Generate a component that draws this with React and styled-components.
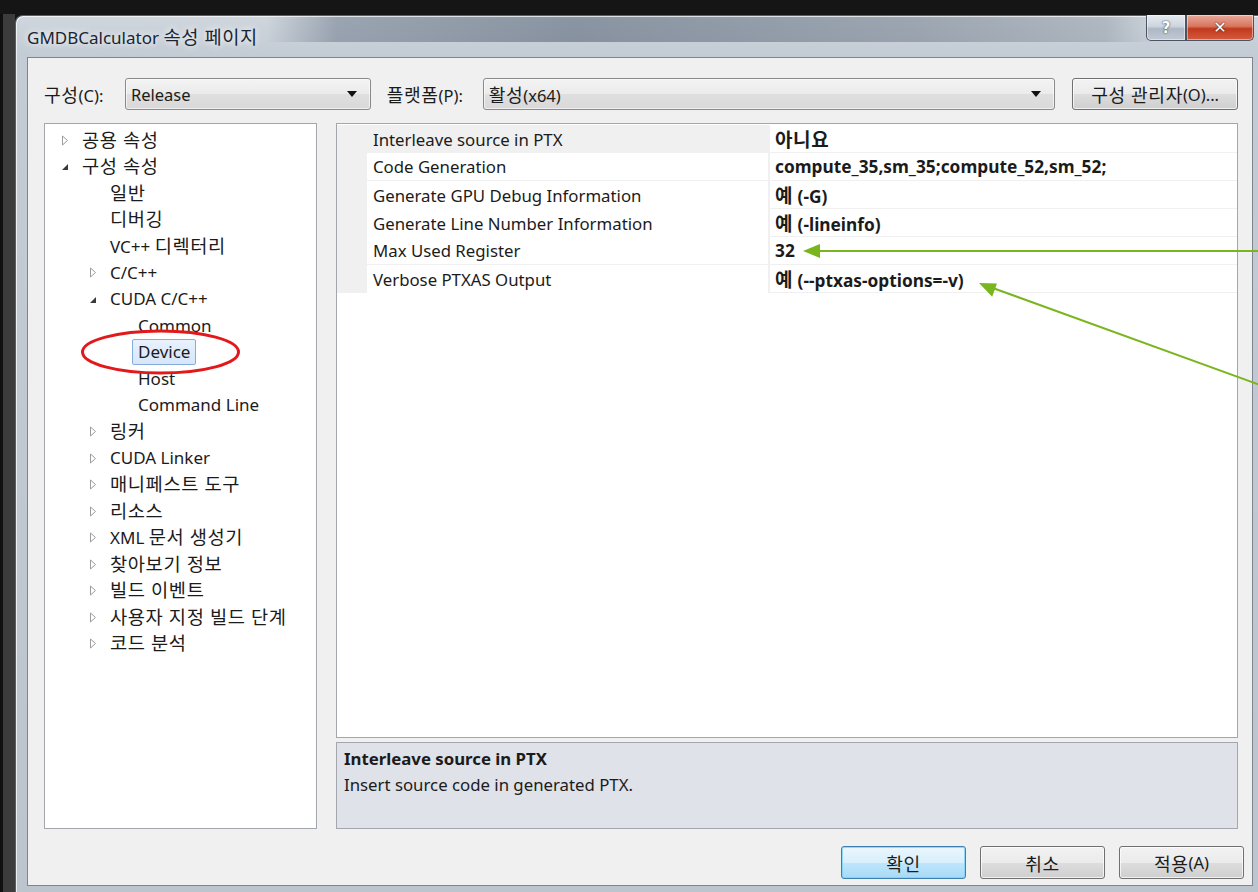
import React from "react";
import styled, { createGlobalStyle } from "styled-components";

const GlobalStyle = createGlobalStyle`
  html, body {
    margin: 0;
    padding: 0;
    overflow: hidden;
    background: #151515;
  }
  body {
    font-family: "Noto Sans", "Noto Sans CJK KR", sans-serif;
    color: #1b1b1b;
  }
  * { box-sizing: border-box; }
`;

/* Hangul runs are set a little larger and looser so they sit like Malgun Gothic beside the Latin text */
const Hangul = styled.span`
  font-size: 1.1em;
  letter-spacing: 0.6px;
`;

const HANGUL_RUN = /([\u3131-\u318E\uAC00-\uD7A3]+(?:\s+[\u3131-\u318E\uAC00-\uD7A3]+)*)/;

function T({ children }) {
  const parts = String(children).split(HANGUL_RUN);
  return parts.map((part, i) =>
    i % 2 === 1 ? <Hangul key={i}>{part}</Hangul> : <React.Fragment key={i}>{part}</React.Fragment>
  );
}

const Screen = styled.div`
  position: relative;
  width: 1258px;
  height: 892px;
  overflow: hidden;
  padding: 15px 0 0 15px;
  background:
    linear-gradient(180deg, #151515 0 14px, transparent 14px),
    linear-gradient(90deg, #101010 0 3px, #3c3c3c 3px 15px, #151515 15px);
`;

const Window = styled.div`
  width: 1247px;
  height: 877px;
  display: flex;
  flex-direction: column;
  padding: 0 8px 0 11px;
  border: 1px solid #55606c;
  border-right: none;
  border-bottom: none;
  border-radius: 8px 0 0 0;
  background:
    linear-gradient(90deg, transparent 250px, rgba(84, 98, 118, 0.42) 320px, rgba(70, 84, 104, 0.5) 560px, rgba(96, 108, 124, 0.45) 900px, rgba(120, 130, 142, 0.35) 1090px, transparent 1140px) top / 100% 26px no-repeat,
    linear-gradient(180deg, #cfd6dd 0%, #c3cbd4 40px, #bcc5ce 100%);
  box-shadow: inset 1px 1px 0 rgba(255, 255, 255, 0.7);
`;

const TitleBar = styled.div`
  height: 41px;
  display: flex;
  align-items: flex-start;
  flex-shrink: 0;
`;

const Title = styled.div`
  align-self: center;
  font-size: 17px;
  color: #1a2533;
  text-shadow: 0 0 6px rgba(255, 255, 255, 0.9), 0 0 12px rgba(255, 255, 255, 0.6);
  margin-top: -2px;
`;

const Controls = styled.div`
  margin-left: auto;
  margin-top: -1px;
  display: flex;
`;

const CaptionButton = styled.div`
  width: ${(p) => p.$w}px;
  height: 26px;
  display: flex;
  align-items: center;
  justify-content: center;
  border: 1px solid #4b5561;
  border-top: none;
  color: #fff;
  font-weight: bold;
  font-family: "DejaVu Sans", sans-serif;
  font-size: ${(p) => (p.$close ? 16 : 15)}px;
  border-radius: ${(p) => (p.$close ? "0 0 5px 0" : "0 0 0 5px")};
  background: ${(p) =>
    p.$close
      ? "linear-gradient(180deg, #e9a99a 0%, #d8765e 45%, #c23a1e 55%, #d45a3c 100%)"
      : "linear-gradient(180deg, #e6ebf0 0%, #cdd5de 45%, #aeb8c4 55%, #c0c9d3 100%)"};
  text-shadow: 0 0 2px rgba(0, 0, 0, 0.6), 0 0 1px rgba(0, 0, 0, 0.6);
  box-shadow: inset 0 0 0 1px rgba(255, 255, 255, 0.45);
`;

const Client = styled.div`
  flex: 1;
  margin-bottom: 6px;
  margin-right: 1px;
  background: #f0f0f0;
  border: 1px solid #7b8691;
  padding: 20px 8px 0 16px;
  display: flex;
  flex-direction: column;
`;

const Toolbar = styled.div`
  display: flex;
  align-items: center;
  height: 32px;
  padding-right: 6px;
`;

const FieldLabel = styled.div`
  width: ${(p) => p.$w}px;
  margin-left: ${(p) => p.$ml || 0}px;
  font-size: 16.5px;
  color: #1b1b1b;
`;

const Combo = styled.div`
  width: ${(p) => p.$w}px;
  height: 32px;
  border: 1px solid #8a8a8a;
  border-radius: 3px;
  background: linear-gradient(180deg, #f3f3f3 0%, #ebebeb 50%, #dfdfdf 51%, #d9d9d9 100%);
  box-shadow: inset 0 0 0 1px rgba(255, 255, 255, 0.6);
  display: flex;
  align-items: center;
  padding: 0 13px 0 5px;
  font-size: 16.5px;
`;

const ComboText = styled.span`
  flex: 1;
`;

const ComboArrow = styled.span`
  width: 0;
  height: 0;
  border-left: 5px solid transparent;
  border-right: 5px solid transparent;
  border-top: 6px solid #111;
`;

const PushButton = styled.div`
  width: ${(p) => p.$w}px;
  height: ${(p) => p.$h || 33}px;
  margin-left: ${(p) => p.$ml || 0}px;
  display: flex;
  align-items: center;
  justify-content: center;
  font-size: 16.5px;
  color: #1b1b1b;
  border-radius: 3px;
  border: 1px solid ${(p) => (p.$primary ? "#3c7fb1" : "#707070")};
  background: ${(p) =>
    p.$primary
      ? "linear-gradient(180deg, #eaf6fd 0%, #d9f0fc 50%, #bee6fd 51%, #a7d9f5 100%)"
      : "linear-gradient(180deg, #f2f2f2 0%, #ebebeb 50%, #dddddd 51%, #cfcfcf 100%)"};
  box-shadow: inset 0 0 0 1px ${(p) => (p.$primary ? "rgba(120, 210, 250, 0.8)" : "rgba(255, 255, 255, 0.7)")};
`;

const Main = styled.div`
  display: flex;
  gap: 19px;
  height: 706px;
  margin-top: 13px;
  padding-right: 6px;
`;

const TreePane = styled.div`
  width: 273px;
  flex-shrink: 0;
  background: #fff;
  border: 1px solid #a3a7ad;
  padding-top: 3px;
`;

const TreeRow = styled.div`
  height: 26.5px;
  display: flex;
  align-items: center;
  padding-left: ${(p) => 16 + p.$level * 28}px;
  font-size: 17px;
  white-space: nowrap;
`;

const Expander = styled.span`
  width: 21px;
  flex-shrink: 0;
  display: flex;
  align-items: center;
`;

const NodeLabel = styled.span`
  margin-left: ${(p) => (p.$selected ? -6 : 0)}px;
  padding: 0 ${(p) => (p.$selected ? 5 : 0)}px;
  line-height: 24px;
  border-radius: 2px;
  border: ${(p) => (p.$selected ? "1px solid #84acdd" : "none")};
  background: ${(p) => (p.$selected ? "linear-gradient(180deg, #e9f2fd 0%, #d6e6fa 100%)" : "transparent")};
`;

const RightColumn = styled.div`
  flex: 1;
  display: flex;
  flex-direction: column;
  gap: 4px;
`;

const Grid = styled.div`
  height: 615px;
  background: #fff;
  border: 1px solid #a3a7ad;
  padding-top: 1px;
`;

const GridRow = styled.div`
  display: grid;
  grid-template-columns: 30px 403px 1fr;
  height: 28px;
  border-bottom: 1px solid #f0f0f0;
  font-size: 16.8px;
`;

const Gutter = styled.div`
  background: #f0f0f0;
`;

const NameCell = styled.div`
  display: flex;
  align-items: center;
  padding-left: 6px;
  border-right: 2px solid #f0f0f0;
  background: ${(p) => (p.$selected ? "#f0f0f0" : "#fff")};
  white-space: nowrap;
`;

const ValueCell = styled.div`
  display: flex;
  align-items: center;
  padding-left: 5px;
  font-weight: bold;
  font-size: 17.3px;
  white-space: nowrap;
`;

const Description = styled.div`
  height: 87px;
  background: #dfe2e9;
  border: 1px solid #a3a7ad;
  padding: 3px 7px;
  font-size: 16.8px;
  line-height: 26px;
`;

const DescTitle = styled.div`
  font-weight: bold;
`;

const Footer = styled.div`
  display: flex;
  justify-content: flex-end;
  gap: 14px;
  margin-top: 17px;
`;

const Overlay = styled.svg`
  position: absolute;
  inset: 0;
  pointer-events: none;
`;

function Collapsed() {
  return (
    <svg width="8" height="11" viewBox="0 0 8 11">
      <path d="M1.5 1 L6.5 5.5 L1.5 10 Z" fill="#fff" stroke="#9c9c9c" strokeWidth="1" />
    </svg>
  );
}

function Expanded() {
  return (
    <svg width="8" height="11" viewBox="0 0 8 11">
      <path d="M7 3 L7 9 L1 9 Z" fill="#3a3a3a" />
    </svg>
  );
}

const tree = [
  { label: "공용 속성", level: 0, state: "closed" },
  { label: "구성 속성", level: 0, state: "open" },
  { label: "일반", level: 1 },
  { label: "디버깅", level: 1 },
  { label: "VC++ 디렉터리", level: 1 },
  { label: "C/C++", level: 1, state: "closed" },
  { label: "CUDA C/C++", level: 1, state: "open" },
  { label: "Common", level: 2 },
  { label: "Device", level: 2, selected: true },
  { label: "Host", level: 2 },
  { label: "Command Line", level: 2 },
  { label: "링커", level: 1, state: "closed" },
  { label: "CUDA Linker", level: 1, state: "closed" },
  { label: "매니페스트 도구", level: 1, state: "closed" },
  { label: "리소스", level: 1, state: "closed" },
  { label: "XML 문서 생성기", level: 1, state: "closed" },
  { label: "찾아보기 정보", level: 1, state: "closed" },
  { label: "빌드 이벤트", level: 1, state: "closed" },
  { label: "사용자 지정 빌드 단계", level: 1, state: "closed" },
  { label: "코드 분석", level: 1, state: "closed" },
];

const props = [
  ["Interleave source in PTX", "아니요"],
  ["Code Generation", "compute_35,sm_35;compute_52,sm_52;"],
  ["Generate GPU Debug Information", "예 (-G)"],
  ["Generate Line Number Information", "예 (-lineinfo)"],
  ["Max Used Register", "32"],
  ["Verbose PTXAS Output", "예 (--ptxas-options=-v)"],
];

export default function App() {
  return (
    <>
      <GlobalStyle />
      <Screen>
        <Window>
          <TitleBar>
            <Title>
              <T>GMDBCalculator 속성 페이지</T>
            </Title>
            <Controls>
              <CaptionButton $w={40}>?</CaptionButton>
              <CaptionButton $w={68} $close>
                ✕
              </CaptionButton>
            </Controls>
          </TitleBar>
          <Client>
            <Toolbar>
              <FieldLabel $w={81}>
                <T>구성(C):</T>
              </FieldLabel>
              <Combo $w={246}>
                <ComboText>Release</ComboText>
                <ComboArrow />
              </Combo>
              <FieldLabel $w={96} $ml={16}>
                <T>플랫폼(P):</T>
              </FieldLabel>
              <Combo $w={573}>
                <ComboText>
                  <T>활성(x64)</T>
                </ComboText>
                <ComboArrow />
              </Combo>
              <PushButton $w={166} $h={32} $ml={17}>
                <T>구성 관리자(O)...</T>
              </PushButton>
            </Toolbar>
            <Main>
              <TreePane>
                {tree.map((n) => (
                  <TreeRow key={n.label} $level={n.level}>
                    <Expander>
                      {n.state === "closed" && <Collapsed />}
                      {n.state === "open" && <Expanded />}
                    </Expander>
                    <NodeLabel $selected={n.selected}>
                      <T>{n.label}</T>
                    </NodeLabel>
                  </TreeRow>
                ))}
              </TreePane>
              <RightColumn>
                <Grid>
                  {props.map(([name, value], i) => (
                    <GridRow key={name}>
                      <Gutter />
                      <NameCell $selected={i === 0}>{name}</NameCell>
                      <ValueCell>
                        <span>
                          <T>{value}</T>
                        </span>
                      </ValueCell>
                    </GridRow>
                  ))}
                </Grid>
                <Description>
                  <DescTitle>Interleave source in PTX</DescTitle>
                  <div>Insert source code in generated PTX.</div>
                </Description>
              </RightColumn>
            </Main>
            <Footer>
              <PushButton $w={125} $primary>
                <T>확인</T>
              </PushButton>
              <PushButton $w={125}>
                <T>취소</T>
              </PushButton>
              <PushButton $w={125}>
                <T>적용(A)</T>
              </PushButton>
            </Footer>
          </Client>
        </Window>
        <Overlay width="1258" height="892" viewBox="0 0 1258 892">
          <ellipse cx="160.5" cy="352" rx="78" ry="21" fill="none" stroke="#e3181b" strokeWidth="3" />
          <line x1="1260" y1="251" x2="816" y2="251" stroke="#79b51c" strokeWidth="2" />
          <path d="M803 251 L820 244 L820 258 Z" fill="#79b51c" />
          <line x1="1260" y1="385" x2="990" y2="287" stroke="#79b51c" strokeWidth="2" />
          <path d="M979 283 L997 283.5 L992.2 296.7 Z" fill="#79b51c" />
        </Overlay>
      </Screen>
    </>
  );
}
